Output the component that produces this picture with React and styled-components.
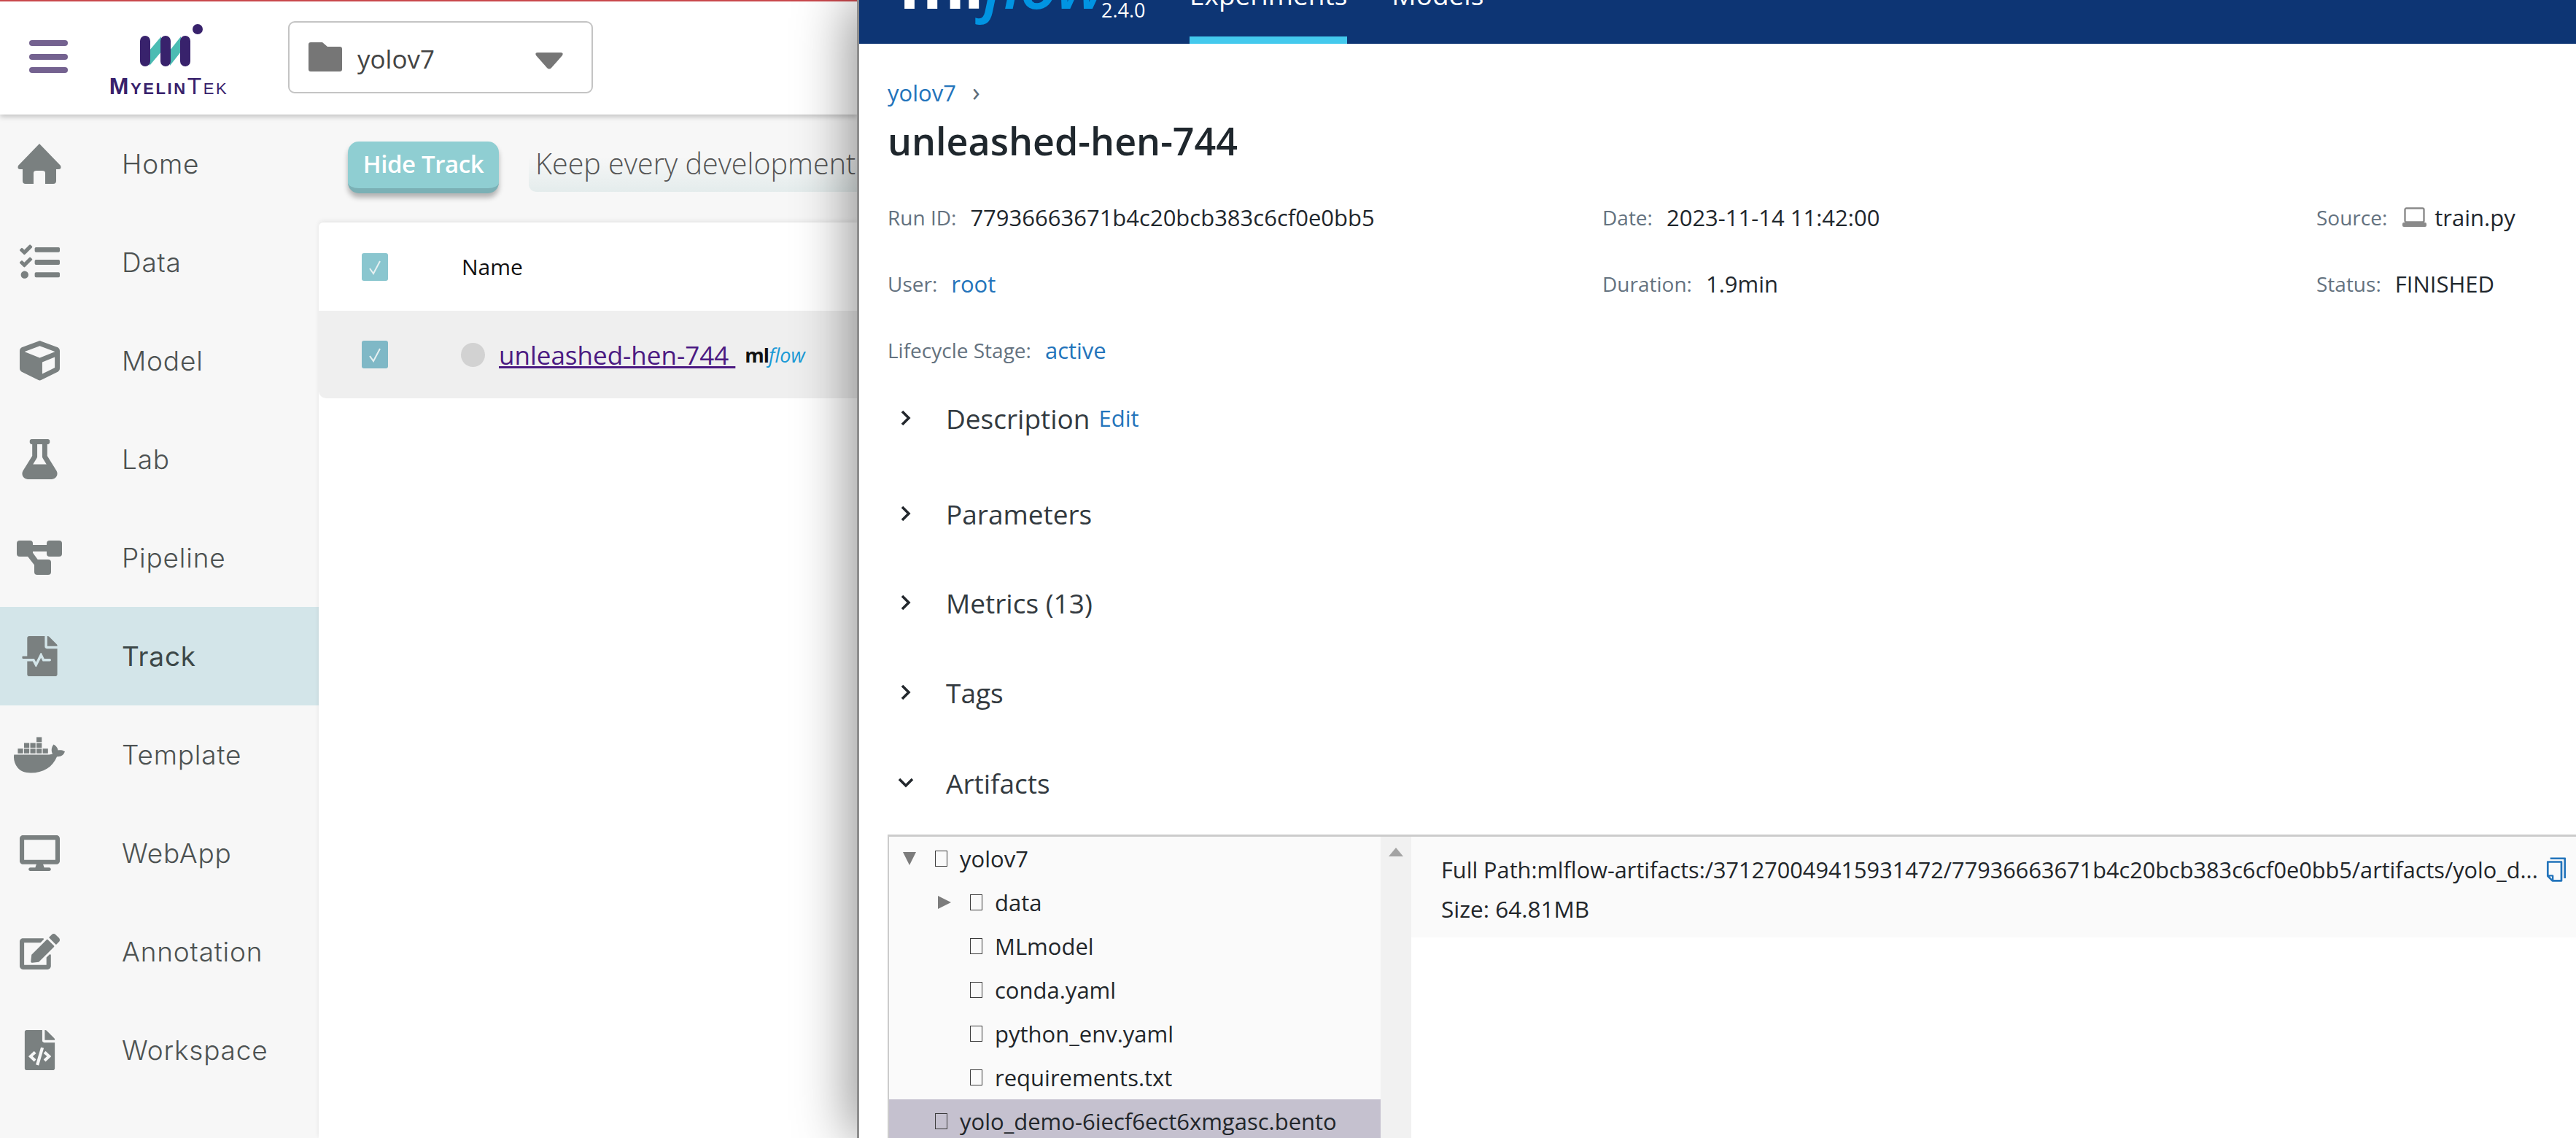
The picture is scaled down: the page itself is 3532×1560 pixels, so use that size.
import React from 'react'
import styled, { createGlobalStyle } from 'styled-components'
import {
  FaTasks, FaCube, FaFlask, FaFileMedicalAlt,
  FaDocker, FaDesktop, FaEdit, FaFileCode,
} from 'react-icons/fa'
import { AiOutlineCopy } from 'react-icons/ai'

const Global = createGlobalStyle`
  html, body { margin: 0; padding: 0; overflow: hidden; background: #fff; }
  * { box-sizing: border-box; }
`

const Page = styled.div`
  display: flex;
  width: 3532px;
  height: 1560px;
  overflow: hidden;
  font-family: "Open Sans", "Noto Sans", sans-serif;
`

/* left app, sits under the drawer */
const AppSide = styled.div`
  width: 1175px;
  flex: none;
  display: flex;
  flex-direction: column;
  background: #fff;
  overflow: hidden;
  border-top: 2px solid #c9484c;
  font-family: Inter, "Open Sans", sans-serif;
`
const TopBar = styled.div`
  height: 155px;
  flex: none;
  display: flex;
  align-items: flex-start;
  background: #fff;
  box-shadow: 0 3px 7px rgba(0,0,0,.22);
  position: relative;
  z-index: 2;
`
const Burger = styled.svg`
  width: 53px;
  height: 46px;
  margin: 53px 0 0 40px;
  flex: none;
`
const Brand = styled.div`
  width: 165px;
  margin: 30px 0 0 56px;
  flex: none;
  display: flex;
  flex-direction: column;
  align-items: center;
`
const BrandMark = styled.svg`
  width: 90px;
  height: 74px;
  margin-left: 11px;
`
const BrandName = styled.div`
  color: #38226c;
  font-family: "Liberation Sans", sans-serif;
  font-size: 32px;
  line-height: 24px;
  font-weight: 700;
  font-variant: small-caps;
  letter-spacing: 2.6px;
  white-space: nowrap;
  b { font-weight: 400; }
`
const ProjectSelect = styled.div`
  width: 418px;
  height: 99px;
  margin: 27px 0 0 81px;
  flex: none;
  display: flex;
  align-items: flex-start;
  border: 2px solid #c4c4c4;
  border-radius: 9px;
  padding: 27px 0 0 26px;
  color: #444;
  font-family: "Open Sans", sans-serif;
  font-size: 35px;
  line-height: 46px;
`
const FolderIcon = styled.svg`
  width: 46px;
  height: 40px;
  flex: none;
`
const SelectLabel = styled.span`
  margin-left: 21px;
  flex: 1;
`
const CaretIcon = styled.svg`
  width: 38px;
  height: 23px;
  margin: 14px 39px 0 0;
  flex: none;
`
const Body = styled.div`
  flex: 1;
  display: flex;
  background: #f7f7f7;
  min-height: 0;
`
const Sidebar = styled.nav`
  width: 437px;
  flex: none;
  display: flex;
  flex-direction: column;
`
const NavItem = styled.div`
  height: 135px;
  flex: none;
  display: flex;
  align-items: center;
  background: ${p => (p.$active ? '#d3e5e9' : 'transparent')};
  color: ${p => (p.$active ? '#3d4848' : '#4d5252')};
  font-size: 37px;
  letter-spacing: 0.8px;
  font-weight: ${p => (p.$active ? 400 : 300)};
`
const NavIcon = styled.div`
  width: 108px;
  margin-right: 59px;
  flex: none;
  display: flex;
  justify-content: center;
  color: #7a8080;
  svg { height: ${p => p.$h || 55}px; width: auto; display: block; }
`
const Content = styled.div`
  flex: 1;
  display: flex;
  flex-direction: column;
  min-width: 0;
`
const Toolbar = styled.div`
  height: 148px;
  flex: none;
  display: flex;
  align-items: flex-start;
  padding: 37px 0 0 40px;
`
const HideButton = styled.div`
  width: 207px;
  height: 71px;
  flex: none;
  background: #8fced2;
  border-bottom: 7px solid #7bb0b5;
  border-radius: 15px;
  box-shadow: 0 6px 7px rgba(0,0,0,.28);
  color: #fff;
  font-family: "Open Sans", sans-serif;
  font-size: 33px;
  font-weight: 600;
  line-height: 62px;
  text-align: center;
  letter-spacing: -0.4px;
`
const Hint = styled.div`
  margin-left: 41px;
  flex: 1;
  height: 69px;
  border-radius: 10px 0 0 10px;
  background: linear-gradient(#f7f7f7 30%, #e4ecec);
  padding: 0 0 0 9px;
  color: #555;
  font-family: "Open Sans", sans-serif;
  font-size: 39.5px;
  font-weight: 300;
  line-height: 60px;
  white-space: nowrap;
  overflow: hidden;
`
const Table = styled.div`
  flex: 1;
  background: #fff;
  box-shadow: 0 -2px 6px rgba(0,0,0,.08);
  border-top-left-radius: 6px;
`
const Row = styled.div`
  height: ${p => (p.$head ? 121 : 120)}px;
  display: flex;
  align-items: center;
  padding-left: 59px;
  background: ${p => (p.$selected ? '#efefef' : 'transparent')};
  border-bottom-left-radius: ${p => (p.$selected ? 10 : 0)}px;
`
const Check = styled.div`
  width: 36px;
  height: 38px;
  flex: none;
  display: flex;
  align-items: center;
  justify-content: center;
  background: ${p => p.$color};
  border-radius: 3px;
  svg { width: 24px; height: 24px; }
`
const NameHead = styled.div`
  margin-left: 101px;
  color: #111;
  font-family: "Open Sans", sans-serif;
  font-size: 30px;
  font-weight: 500;
`
const StatusDot = styled.div`
  width: 33px;
  height: 33px;
  margin-left: 100px;
  flex: none;
  border-radius: 50%;
  background: #d2d2d2;
`
const RunLink = styled.a`
  margin-left: 19px;
  color: #4b1a82;
  font-family: "Open Sans", sans-serif;
  font-size: 35px;
  text-decoration: underline;
  white-space: pre;
`
const MiniLogo = styled.span`
  margin-left: 13px;
  font-family: "Open Sans", sans-serif;
  font-size: 27px;
  color: #111;
  font-weight: 700;
  letter-spacing: -1px;
  i { color: #1a9ad6; font-weight: 500; letter-spacing: 0; }
`

/* mlflow drawer */
const Drawer = styled.div`
  flex: 1;
  min-width: 0;
  position: relative;
  z-index: 5;
  background: #fff;
  border-left: 3px solid #8d8d8d;
  box-shadow: -10px 0 70px rgba(0,0,0,.42);
  display: flex;
  flex-direction: column;
  color: #1f272d;
  font-size: 31px;
`
const MlHeader = styled.div`
  height: 60px;
  flex: none;
  display: flex;
  align-items: flex-end;
  background: #0d3574;
  overflow: hidden;
  padding-left: 55px;
  color: #fff;
`
const MlLogo = styled.div`
  width: 277px;
  height: 60px;
  flex: none;
  display: flex;
  align-items: flex-end;
  padding-bottom: 53px;
  font-size: 92px;
  font-weight: 700;
  line-height: 60px;
  letter-spacing: -2px;
  white-space: nowrap;
  i { color: #0194e2; font-weight: 600; letter-spacing: -3px; }
`
const MlVersion = styled.div`
  width: 121px;
  height: 60px;
  flex: none;
  display: flex;
  align-items: flex-end;
  padding-bottom: 36px;
  font-size: 27px;
  line-height: 20px;
`
const MlTab = styled.div`
  height: 60px;
  flex: none;
  display: flex;
  align-items: flex-end;
  margin-right: 61px;
  padding-bottom: ${p => (p.$active ? 42 : 52)}px;
  border-bottom: ${p => (p.$active ? '10px solid #43c9ed' : 'none')};
  font-size: 37px;
  line-height: 30px;
`
const Main = styled.div`
  flex: 1;
  min-height: 0;
  padding-left: 39px;
  display: flex;
  flex-direction: column;
`
const Crumb = styled.div`
  height: 44px;
  margin-top: 45px;
  flex: none;
  line-height: 44px;
  color: #2374bb;
  font-size: 31px;
  span { color: #5c6b78; margin-left: 22px; font-size: 36px; line-height: 30px; }
`
const RunTitle = styled.h1`
  height: 72px;
  margin: 8px 0 0;
  flex: none;
  font-size: 52px;
  line-height: 72px;
  font-weight: 600;
  color: #1f272d;
`
const MetaGrid = styled.div`
  margin-top: 23px;
  flex: none;
  display: grid;
  grid-template-columns: 980px 979px 1fr;
  grid-auto-rows: 91px;
  align-items: center;
  font-size: 31px;
`
const MetaItem = styled.div`
  display: flex;
  align-items: center;
  white-space: nowrap;
`
const MetaLabel = styled.span`
  color: #64727f;
  font-size: 28px;
  margin-right: 19px;
`
const MetaLink = styled.span`
  color: #2374bb;
`
const LaptopIcon = styled.svg`
  width: 33px;
  height: 27px;
  margin: 0 11px 0 2px;
  flex: none;
`
const Section = styled.div`
  height: 60px;
  margin-top: ${p => p.$mt}px;
  flex: none;
  display: flex;
  align-items: center;
  font-size: 37px;
  color: #333a40;
`
const Chevron = styled.svg`
  width: 26px;
  height: 26px;
  margin-right: 54px;
  flex: none;
  transform: translateX(12px);
`
const EditLink = styled.span`
  margin-left: 12px;
  color: #2374bb;
  font-size: 31px;
`
const Artifacts = styled.div`
  flex: 1;
  min-height: 0;
  margin-top: 41px;
  display: flex;
  border-top: 3px solid #cccccc;
  border-left: 2px solid #cccccc;
  overflow: hidden;
`
const Tree = styled.div`
  width: 674px;
  flex: none;
  background: #fafafa;
`
const TreeRow = styled.div`
  height: 60px;
  display: flex;
  align-items: center;
  padding-left: ${p => 19 + p.$depth * 48}px;
  background: ${p => (p.$selected ? '#c5c1cf' : 'transparent')};
  font-size: 31px;
  color: #22262a;
  white-space: nowrap;
`
const Twist = styled.div`
  width: 26px;
  flex: none;
  display: flex;
  svg { width: 18px; height: 18px; }
`
const Tofu = styled.span`
  width: 17px;
  height: 22px;
  margin: 0 17px 0 18px;
  flex: none;
  border: 1.5px solid #3b3b3b;
`
const ScrollTrack = styled.div`
  width: 42px;
  flex: none;
  background: #f1f1f1;
  display: flex;
  justify-content: center;
  padding-top: 15px;
  svg { width: 20px; height: 12px; }
`
const DetailPane = styled.div`
  flex: 1;
  min-width: 0;
`
const DetailHead = styled.div`
  height: 138px;
  background: #fafafa;
  padding: 18px 0 0 41px;
  font-size: 30.7px;
  line-height: 54px;
  color: #22262a;
`
const PathRow = styled.div`
  display: flex;
  align-items: center;
  white-space: nowrap;
  svg { width: 38px; height: 40px; margin-left: 6px; color: #2374bb; flex: none; }
`
const SizeLine = styled.div`
  font-size: 31.5px;
`

const navItems = [
  { label: 'Home', h: 55, icon: (
    <svg viewBox="0 0 62 55"><path fill="currentColor" d="M31 0 L60 30 Q62 35 57 35 L54 35 L54 51 Q54 55 50 55 L39 55 L39 40 Q39 37 35 37 L27 37 Q23 37 23 40 L23 55 L12 55 Q8 55 8 51 L8 35 L5 35 Q0 35 2 30 Z" /></svg>
  ) },
  { label: 'Data', h: 55, icon: <FaTasks /> },
  { label: 'Model', h: 55, icon: <FaCube /> },
  { label: 'Lab', h: 55, icon: <FaFlask /> },
  { label: 'Pipeline', h: 47, icon: (
    <svg viewBox="0 0 62 47">
      <g fill="currentColor">
        <rect x="0" y="0" width="22" height="22" rx="4" />
        <rect x="41" y="0" width="21" height="22" rx="4" />
        <rect x="20" y="6" width="24" height="9" />
        <rect x="24" y="26" width="23" height="21" rx="4" />
        <path d="M12 18 L20 14 L33 32 L26 36 Z" />
      </g>
    </svg>
  ) },
  { label: 'Track', h: 55, active: true, icon: <FaFileMedicalAlt /> },
  { label: 'Template', h: 70, icon: <FaDocker /> },
  { label: 'WebApp', h: 55, icon: <FaDesktop /> },
  { label: 'Annotation', h: 55, icon: <FaEdit /> },
  { label: 'Workspace', h: 55, icon: <FaFileCode /> },
]

const treeItems = [
  { name: 'yolov7', depth: 0, open: true },
  { name: 'data', depth: 1, closed: true },
  { name: 'MLmodel', depth: 1 },
  { name: 'conda.yaml', depth: 1 },
  { name: 'python_env.yaml', depth: 1 },
  { name: 'requirements.txt', depth: 1 },
  { name: 'yolo_demo-6iecf6ect6xmgasc.bento', depth: 0, selected: true },
]

const CheckMark = () => (
  <svg viewBox="0 0 24 24"><path d="M5 14 L10 21 L19 4" fill="none" stroke="#e6f0f1" strokeWidth="2" /></svg>
)

const Chev = ({ open }) => (
  <Chevron viewBox="0 0 26 26">
    <path d={open ? 'M4 8 L13 17 L22 8' : 'M8 4 L17 13 L8 22'} fill="none" stroke="#23282d" strokeWidth="3.6" />
  </Chevron>
)

export default function App() {
  return (
    <Page>
      <Global />
      <AppSide>
        <TopBar>
          <Burger viewBox="0 0 53 46">
            <rect y="0" width="53" height="8" rx="4" fill="#746290" />
            <rect y="19" width="53" height="8" rx="4" fill="#746290" />
            <rect y="37" width="53" height="8" rx="4" fill="#746290" />
          </Burger>
          <Brand>
            <BrandMark viewBox="0 0 90 74">
              <path d="M13 58 L13 37 L29 18 L29 39 Z M41 58 L41 37 L56 18 L56 39 Z" fill="#4bbcb3" />
              <rect x="0" y="17" width="14" height="42" rx="7" fill="#38226c" />
              <rect x="28" y="17" width="14" height="42" rx="7" fill="#38226c" />
              <rect x="55" y="17" width="14" height="42" rx="7" fill="#38226c" />
              <circle cx="79" cy="8" r="7" fill="#38226c" />
            </BrandMark>
            <BrandName>Myelin<b>Tek</b></BrandName>
          </Brand>
          <ProjectSelect>
            <FolderIcon viewBox="0 0 46 40">
              <path d="M3 0 H19 L26 6 H43 Q46 6 46 9 V37 Q46 40 43 40 H3 Q0 40 0 37 V3 Q0 0 3 0 Z" fill="#767676" />
            </FolderIcon>
            <SelectLabel>yolov7</SelectLabel>
            <CaretIcon viewBox="0 0 38 23">
              <path d="M3 0 H35 Q39 0 37 4 L22 21 Q19 24 16 21 L1 4 Q-1 0 3 0 Z" fill="#767676" />
            </CaretIcon>
          </ProjectSelect>
        </TopBar>
        <Body>
          <Sidebar>
            {navItems.map(item => (
              <NavItem key={item.label} $active={item.active}>
                <NavIcon $h={item.h}>{item.icon}</NavIcon>
                {item.label}
              </NavItem>
            ))}
          </Sidebar>
          <Content>
            <Toolbar>
              <HideButton>Hide Track</HideButton>
              <Hint>Keep every development record</Hint>
            </Toolbar>
            <Table>
              <Row $head>
                <Check $color="#8ac6cf"><CheckMark /></Check>
                <NameHead>Name</NameHead>
              </Row>
              <Row $selected>
                <Check $color="#7fb8c6"><CheckMark /></Check>
                <StatusDot />
                <RunLink>unleashed-hen-744 </RunLink>
                <MiniLogo>ml<i>flow</i></MiniLogo>
              </Row>
            </Table>
          </Content>
        </Body>
      </AppSide>

      <Drawer>
        <MlHeader>
          <MlLogo>ml<i>flow</i></MlLogo>
          <MlVersion>2.4.0</MlVersion>
          <MlTab $active>Experiments</MlTab>
          <MlTab>Models</MlTab>
        </MlHeader>
        <Main>
          <Crumb>yolov7<span>›</span></Crumb>
          <RunTitle>unleashed-hen-744</RunTitle>
          <MetaGrid>
            <MetaItem><MetaLabel>Run ID:</MetaLabel>77936663671b4c20bcb383c6cf0e0bb5</MetaItem>
            <MetaItem><MetaLabel>Date:</MetaLabel>2023-11-14 11:42:00</MetaItem>
            <MetaItem>
              <MetaLabel>Source:</MetaLabel>
              <LaptopIcon viewBox="0 0 33 27">
                <rect x="3.5" y="1.5" width="26" height="19" rx="2" fill="none" stroke="#8a8a8a" strokeWidth="2.4" />
                <rect x="0" y="21" width="33" height="6" rx="2" fill="#8a8a8a" />
              </LaptopIcon>
              train.py
            </MetaItem>
            <MetaItem><MetaLabel>User:</MetaLabel><MetaLink>root</MetaLink></MetaItem>
            <MetaItem><MetaLabel>Duration:</MetaLabel>1.9min</MetaItem>
            <MetaItem><MetaLabel>Status:</MetaLabel>FINISHED</MetaItem>
            <MetaItem><MetaLabel>Lifecycle Stage:</MetaLabel><MetaLink>active</MetaLink></MetaItem>
          </MetaGrid>
          <Section $mt={18}><Chev />Description<EditLink>Edit</EditLink></Section>
          <Section $mt={71}><Chev />Parameters</Section>
          <Section $mt={62}><Chev />Metrics (13)</Section>
          <Section $mt={63}><Chev />Tags</Section>
          <Section $mt={64}><Chev open />Artifacts</Section>
          <Artifacts>
            <Tree>
              {treeItems.map(item => (
                <TreeRow key={item.name} $depth={item.depth} $selected={item.selected}>
                  <Twist>
                    {item.open && <svg viewBox="0 0 18 18"><path d="M0 0 H18 L9 18 Z" fill="#7c7c7c" /></svg>}
                    {item.closed && <svg viewBox="0 0 18 18"><path d="M0 0 L18 9 L0 18 Z" fill="#7c7c7c" /></svg>}
                  </Twist>
                  <Tofu />
                  {item.name}
                </TreeRow>
              ))}
            </Tree>
            <ScrollTrack>
              <svg viewBox="0 0 20 12"><path d="M10 0 L20 12 H0 Z" fill="#a3a3a3" /></svg>
            </ScrollTrack>
            <DetailPane>
              <DetailHead>
                <PathRow>
                  Full Path:mlflow-artifacts:/371270049415931472/77936663671b4c20bcb383c6cf0e0bb5/artifacts/yolo_d...
                  <AiOutlineCopy />
                </PathRow>
                <SizeLine>Size: 64.81MB</SizeLine>
              </DetailHead>
            </DetailPane>
          </Artifacts>
        </Main>
      </Drawer>
    </Page>
  )
}
